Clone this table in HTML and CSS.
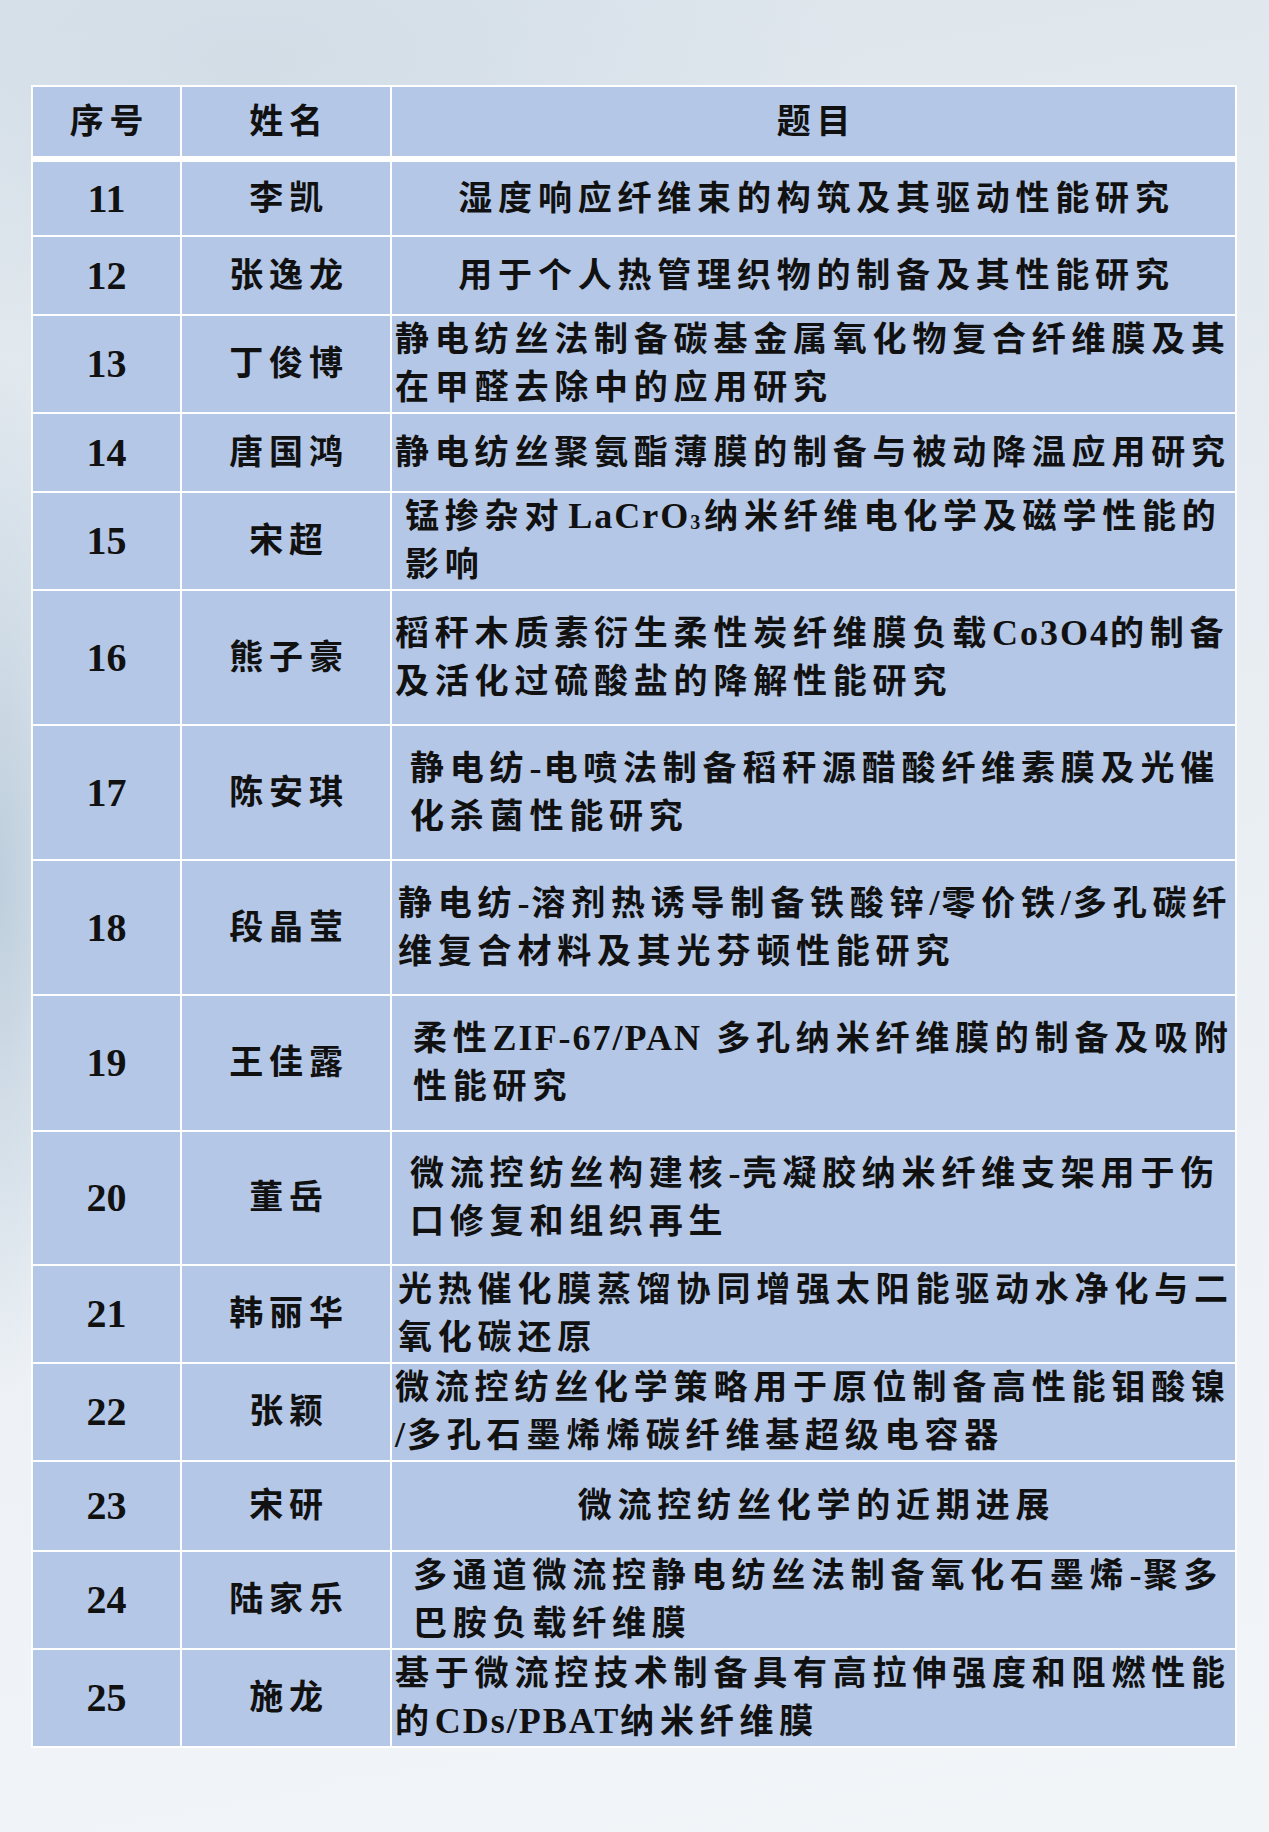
FILE: index.html
```html
<!DOCTYPE html>
<html lang="zh-CN">
<head>
<meta charset="utf-8">
<title>题目列表</title>
<link rel="stylesheet" href="styles.css">
</head>
<body>
<main class="page">
  <table class="list">
    <colgroup>
      <col class="c-no">
      <col class="c-name">
      <col class="c-title">
    </colgroup>
    <thead>
      <tr class="h-head">
        <th>序号</th>
        <th class="name">姓名</th>
        <th class="title center">题目</th>
      </tr>
    </thead>
    <tbody>
      <tr class="h77">
        <td class="no">11</td><td class="name">李凯</td>
        <td class="title center">湿度响应纤维束的构筑及其驱动性能研究</td>
      </tr>
      <tr class="h79">
        <td class="no">12</td><td class="name">张逸龙</td>
        <td class="title center">用于个人热管理织物的制备及其性能研究</td>
      </tr>
      <tr class="h98">
        <td class="no">13</td><td class="name">丁俊博</td>
        <td class="title">静电纺丝法制备碳基金属氧化物复合纤维膜及其<br>在甲醛去除中的应用研究</td>
      </tr>
      <tr class="h79">
        <td class="no">14</td><td class="name">唐国鸿</td>
        <td class="title">静电纺丝聚氨酯薄膜的制备与被动降温应用研究</td>
      </tr>
      <tr class="h98">
        <td class="no">15</td><td class="name">宋超</td>
        <td class="title ind-13">锰掺杂对<b class="lat gap">LaCrO<span class="sub">3</span></b>纳米纤维电化学及磁学性能的<br>影响</td>
      </tr>
      <tr class="h135">
        <td class="no">16</td><td class="name">熊子豪</td>
        <td class="title">稻秆木质素衍生柔性炭纤维膜负载<b class="lat">Co3O4</b>的制备<br>及活化过硫酸盐的降解性能研究</td>
      </tr>
      <tr class="h135">
        <td class="no">17</td><td class="name">陈安琪</td>
        <td class="title ind-18">静电纺<b class="lat">-</b>电喷法制备稻秆源醋酸纤维素膜及光催<br>化杀菌性能研究</td>
      </tr>
      <tr class="h135">
        <td class="no">18</td><td class="name">段晶莹</td>
        <td class="title ind-6">静电纺<b class="lat">-</b>溶剂热诱导制备铁酸锌<b class="lat">/</b>零价铁<b class="lat">/</b>多孔碳纤<br>维复合材料及其光芬顿性能研究</td>
      </tr>
      <tr class="h136">
        <td class="no">19</td><td class="name">王佳露</td>
        <td class="title ind-21">柔性<b class="lat">ZIF-67/PAN</b> 多孔纳米纤维膜的制备及吸附<br>性能研究</td>
      </tr>
      <tr class="h134">
        <td class="no">20</td><td class="name">董岳</td>
        <td class="title ind-18">微流控纺丝构建核<b class="lat">-</b>壳凝胶纳米纤维支架用于伤<br>口修复和组织再生</td>
      </tr>
      <tr class="h97">
        <td class="no">21</td><td class="name">韩丽华</td>
        <td class="title ind-6">光热催化膜蒸馏协同增强太阳能驱动水净化与二<br>氧化碳还原</td>
      </tr>
      <tr class="h98">
        <td class="no">22</td><td class="name">张颖</td>
        <td class="title">微流控纺丝化学策略用于原位制备高性能钼酸镍<br><b class="lat">/</b>多孔石墨烯烯碳纤维基超级电容器</td>
      </tr>
      <tr class="h90">
        <td class="no">23</td><td class="name">宋研</td>
        <td class="title center">微流控纺丝化学的近期进展</td>
      </tr>
      <tr class="h98">
        <td class="no">24</td><td class="name">陆家乐</td>
        <td class="title ind-21">多通道微流控静电纺丝法制备氧化石墨烯<b class="lat">-</b>聚多<br>巴胺负载纤维膜</td>
      </tr>
      <tr class="h98">
        <td class="no">25</td><td class="name">施龙</td>
        <td class="title">基于微流控技术制备具有高拉伸强度和阻燃性能<br>的<b class="lat">CDs/PBAT</b>纳米纤维膜</td>
      </tr>
    </tbody>
  </table>
</main>
</body>
</html>
```

FILE: styles.css
```css
html, body {
  margin: 0;
  padding: 0;
}

body {
  width: 1269px;
  min-height: 1832px;
  background:
    radial-gradient(ellipse 110px 520px at 0 880px, rgba(176, 196, 214, 0.75), rgba(176, 196, 214, 0) 100%),
    radial-gradient(ellipse 600px 300px at 250px 60px, rgba(205, 217, 228, 0.7), rgba(205, 217, 228, 0) 100%),
    linear-gradient(170deg, #dde5ec 0%, #e6ecf1 35%, #eef2f6 70%, #f2f5f8 100%);
  font-family: "Liberation Serif", "Noto Sans CJK SC", serif;
  color: #111;
}

.page {
  padding: 85px 0 0 31px;
}

.list {
  border-collapse: collapse;
  table-layout: fixed;
  width: 1204px;
}

.c-no { width: 149px; }
.c-name { width: 210px; }
.c-title { width: 845px; }

.list th,
.list td {
  background: #b4c7e7;
  border: 2px solid #fff;
  padding: 0;
  vertical-align: middle;
  text-align: center;
  font-size: 34px;
  font-weight: 700;
  letter-spacing: 5.8px;
  line-height: 48px;
  white-space: nowrap;
}

.list th {
  border-bottom: 6px solid #fff;
  padding-left: 6px;
}

.list td.no {
  font-family: "Liberation Serif", serif;
  font-weight: 700;
  font-size: 40px;
  letter-spacing: 0;
}

.list td.name {
  padding-left: 6px;
}

.list td.title {
  text-align: left;
  padding-left: 3px;
}

.list .title.center {
  text-align: center;
  padding-left: 6px;
}

.list .title.ind-6 { padding-left: 6px; }
.list .title.ind-13 { padding-left: 13px; }
.list .title.ind-18 { padding-left: 18px; }
.list .title.ind-21 { padding-left: 21px; }

.lat {
  font-family: "Liberation Serif", serif;
  font-weight: 700;
  font-size: 36px;
  letter-spacing: 2px;
  line-height: 1;
}

.lat.gap {
  margin-left: 4px;
}

.sub {
  font-size: 20px;
  letter-spacing: 0;
  position: relative;
  top: 1px;
  margin-right: 4px;
}

.h-head { height: 73px; }
.h77 { height: 77px; }
.h79 { height: 79px; }
.h90 { height: 90px; }
.h97 { height: 97px; }
.h98 { height: 98px; }
.h134 { height: 134px; }
.h135 { height: 135px; }
.h136 { height: 136px; }
```
